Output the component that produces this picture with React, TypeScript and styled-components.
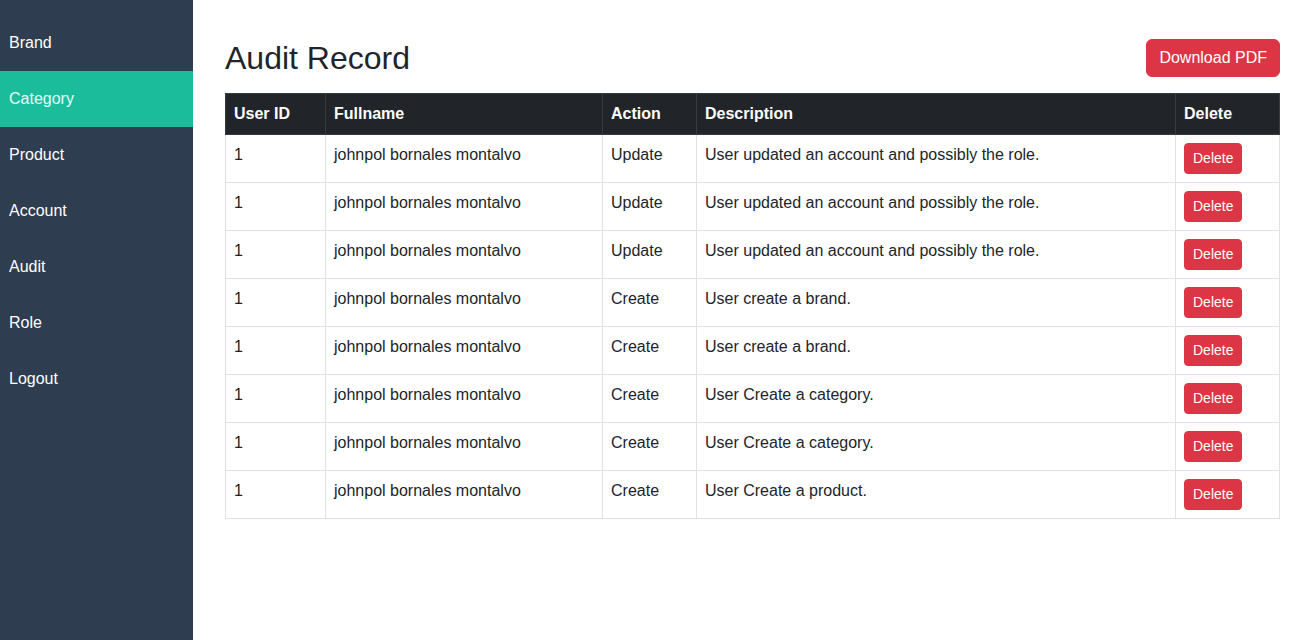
import React from 'react';
import styled, { createGlobalStyle } from 'styled-components';

type Audit = {
  userId: number;
  fullname: string;
  action: string;
  description: string;
};

const navItems = ['Brand', 'Category', 'Product', 'Account', 'Audit', 'Role', 'Logout'];

const records: Audit[] = [
  { userId: 1, fullname: 'johnpol bornales montalvo', action: 'Update', description: 'User updated an account and possibly the role.' },
  { userId: 1, fullname: 'johnpol bornales montalvo', action: 'Update', description: 'User updated an account and possibly the role.' },
  { userId: 1, fullname: 'johnpol bornales montalvo', action: 'Update', description: 'User updated an account and possibly the role.' },
  { userId: 1, fullname: 'johnpol bornales montalvo', action: 'Create', description: 'User create a brand.' },
  { userId: 1, fullname: 'johnpol bornales montalvo', action: 'Create', description: 'User create a brand.' },
  { userId: 1, fullname: 'johnpol bornales montalvo', action: 'Create', description: 'User Create a category.' },
  { userId: 1, fullname: 'johnpol bornales montalvo', action: 'Create', description: 'User Create a category.' },
  { userId: 1, fullname: 'johnpol bornales montalvo', action: 'Create', description: 'User Create a product.' },
];

const App = () => {
  return (
    <>
      <GlobalStyle />
      <Layout>
        <Sidebar>
          {navItems.map((item) => (
            <NavItem key={item} active={item === 'Category'}>
              {item}
            </NavItem>
          ))}
        </Sidebar>

        <Main>
          <PageHeader>
            <Title>Audit Record</Title>
            <PdfButton>Download PDF</PdfButton>
          </PageHeader>

          <Table>
            <colgroup>
              <col style={{ width: 100 }} />
              <col style={{ width: 277 }} />
              <col style={{ width: 94 }} />
              <col style={{ width: 479 }} />
              <col style={{ width: 104 }} />
            </colgroup>
            <thead>
              <tr>
                <Th>User ID</Th>
                <Th>Fullname</Th>
                <Th>Action</Th>
                <Th>Description</Th>
                <Th>Delete</Th>
              </tr>
            </thead>
            <tbody>
              {records.map((r, i) => (
                <tr key={i}>
                  <Td>{r.userId}</Td>
                  <Td>{r.fullname}</Td>
                  <Td>{r.action}</Td>
                  <Td>{r.description}</Td>
                  <Td>
                    <DeleteButton>Delete</DeleteButton>
                  </Td>
                </tr>
              ))}
            </tbody>
          </Table>
        </Main>
      </Layout>
    </>
  );
};

export default App;

const GlobalStyle = createGlobalStyle`
  * {
    box-sizing: border-box;
  }
  body {
    margin: 0;
    font-family: "Liberation Sans", Arial, sans-serif;
    font-size: 16px;
    color: #212529;
    background: #fff;
  }
`;

const Layout = styled.div`
  display: flex;
  width: 1306px;
  height: 640px;
`;

const Sidebar = styled.nav`
  width: 193px;
  flex-shrink: 0;
  background: #2e3d4f;
  padding-top: 15px;
  display: flex;
  flex-direction: column;
`;

const NavItem = styled.a.withConfig({
  shouldForwardProp: (prop) => prop !== 'active',
})<{ active?: boolean }>`
  display: flex;
  align-items: center;
  height: 56px;
  padding-left: 9px;
  font-size: 16px;
  color: ${({ active }) => (active ? '#e3fdf6' : '#ffffff')};
  background: ${({ active }) => (active ? '#1abc9c' : 'transparent')};
  text-decoration: none;
  cursor: pointer;
`;

const Main = styled.main`
  flex: 1;
  padding: 39px 28px 0 32px;
`;

const PageHeader = styled.div`
  display: flex;
  justify-content: space-between;
  align-items: center;
  margin-bottom: 16px;
`;

const Title = styled.h1`
  margin: 0;
  font-size: 32px;
  font-weight: 400;
  line-height: 1.2;
  color: #212529;
`;

const PdfButton = styled.button`
  font-family: inherit;
  font-size: 16px;
  line-height: 24px;
  padding: 6px 12px;
  border: 1px solid #dc3545;
  border-radius: 6px;
  background: #dc3545;
  color: #fff;
  cursor: pointer;
`;

const Table = styled.table`
  width: 100%;
  table-layout: fixed;
  border-collapse: collapse;
  font-size: 16px;
`;

const Th = styled.th`
  background: #212529;
  color: #fff;
  font-weight: 700;
  text-align: left;
  padding: 8px;
  line-height: 24px;
  border: 1px solid #373b3e;
  vertical-align: bottom;
`;

const Td = styled.td`
  padding: 8px;
  line-height: 24px;
  border: 1px solid #dee2e6;
  vertical-align: top;
  color: #212529;
`;

const DeleteButton = styled.button`
  font-family: inherit;
  font-size: 14px;
  line-height: 21px;
  padding: 4px 8px;
  border: 1px solid #dc3545;
  border-radius: 4px;
  background: #dc3545;
  color: #fff;
  cursor: pointer;
  display: block;
`;
